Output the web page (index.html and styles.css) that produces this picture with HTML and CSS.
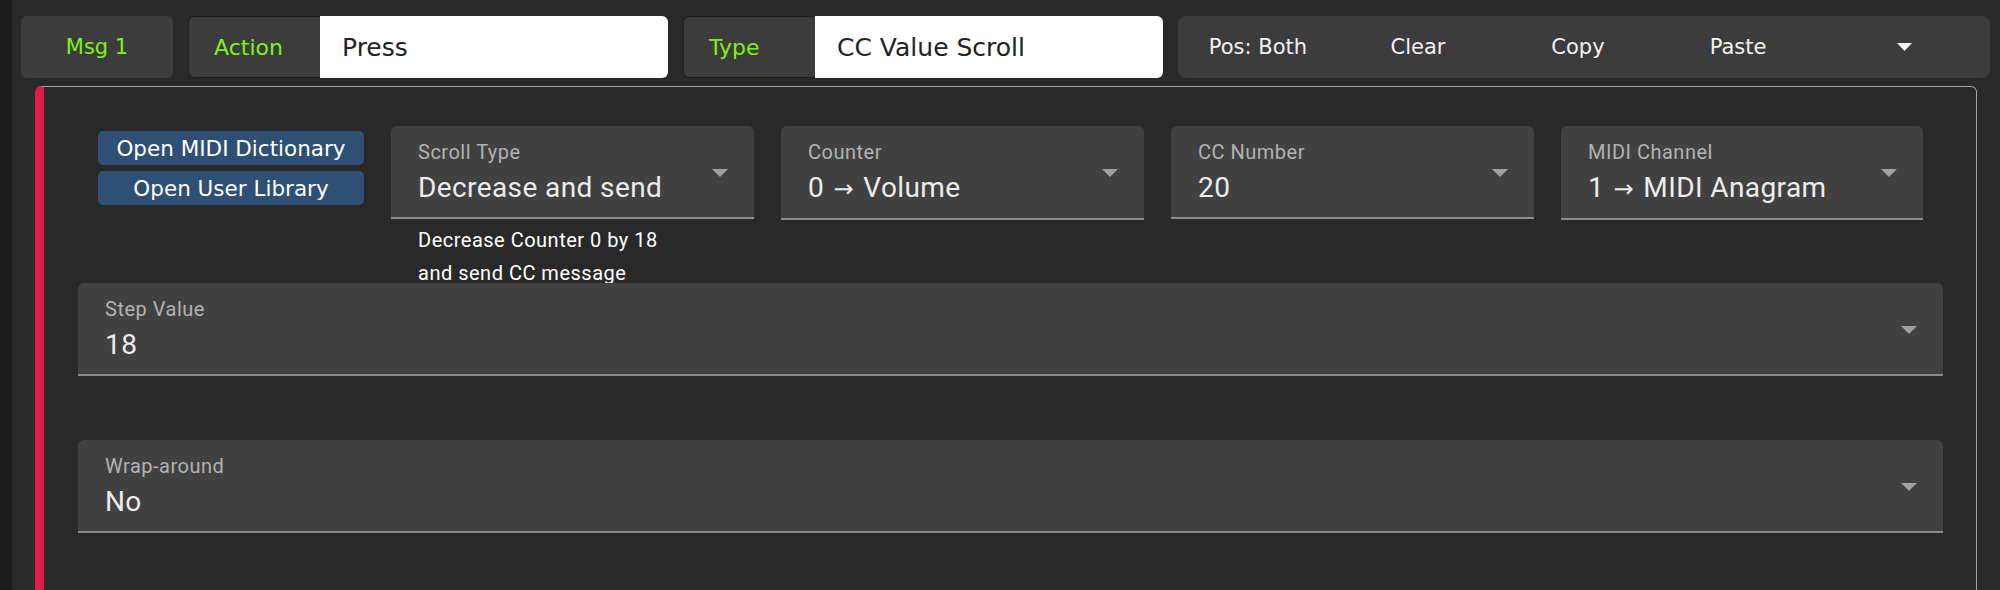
FILE: index.html
```html
<!DOCTYPE html>
<html lang="en">
<head>
  <meta charset="UTF-8" />
  <meta name="viewport" content="width=device-width, initial-scale=1.0"/>
  <title>Message Editor</title>
  <link rel="stylesheet" href="styles.css">
</head>
<body>
  <div class="app">
    <aside class="rail"></aside>

    <main class="editor">

      <!-- Message header -->
      <div class="msg-bar">
        <div class="msg-tag">Msg 1</div>
        <div class="pair">
          <span class="pair-label">Action</span>
          <span class="pair-value">Press</span>
        </div>
        <div class="pair">
          <span class="pair-label">Type</span>
          <span class="pair-value">CC Value Scroll</span>
        </div>
        <div class="msg-tools">
          <button class="tool-btn">Pos: Both</button>
          <button class="tool-btn">Clear</button>
          <button class="tool-btn">Copy</button>
          <button class="tool-btn">Paste</button>
          <span class="tool-more">
            <svg width="15" height="8" viewBox="0 0 15 8"><path d="M0 0h15L7.5 8z" fill="#f2f2f2"/></svg>
          </span>
        </div>
      </div>

      <!-- Message settings -->
      <section class="msg-panel">
        <div class="panel-row">
          <div class="lib-buttons">
            <button class="lib-btn">Open MIDI Dictionary</button>
            <button class="lib-btn">Open User Library</button>
          </div>

          <div class="select-col">
            <div class="select">
              <div class="select-label">Scroll Type</div>
              <div class="select-value">Decrease and send</div>
              <svg class="select-arrow" width="16" height="8" viewBox="0 0 16 8"><path d="M0 0h16L8 8z"/></svg>
            </div>
            <p class="help">Decrease Counter 0 by 18<br>and send CC message</p>
          </div>

          <div class="select-col">
            <div class="select">
              <div class="select-label">Counter</div>
              <div class="select-value">0 <span class="arrow">→</span> Volume</div>
              <svg class="select-arrow" width="16" height="8" viewBox="0 0 16 8"><path d="M0 0h16L8 8z"/></svg>
            </div>
          </div>

          <div class="select-col">
            <div class="select">
              <div class="select-label">CC Number</div>
              <div class="select-value">20</div>
              <svg class="select-arrow" width="16" height="8" viewBox="0 0 16 8"><path d="M0 0h16L8 8z"/></svg>
            </div>
          </div>

          <div class="select-col last">
            <div class="select">
              <div class="select-label">MIDI Channel</div>
              <div class="select-value">1 <span class="arrow">→</span> MIDI Anagram</div>
              <svg class="select-arrow" width="16" height="8" viewBox="0 0 16 8"><path d="M0 0h16L8 8z"/></svg>
            </div>
          </div>
        </div>

        <div class="select">
          <div class="select-label">Step Value</div>
          <div class="select-value">18</div>
          <svg class="select-arrow" width="16" height="8" viewBox="0 0 16 8"><path d="M0 0h16L8 8z"/></svg>
        </div>

        <div class="select wrap">
          <div class="select-label">Wrap-around</div>
          <div class="select-value">No</div>
          <svg class="select-arrow" width="16" height="8" viewBox="0 0 16 8"><path d="M0 0h16L8 8z"/></svg>
        </div>
      </section>

    </main>
  </div>
</body>
</html>
```

FILE: styles.css
```css
* {
  margin: 0;
  padding: 0;
  box-sizing: border-box;
}

body {
  background: #292929;
  height: 590px;
  overflow: hidden;
  font-family: 'DejaVu Sans', sans-serif;
}

.app {
  display: flex;
  min-height: 590px;
}

.rail {
  width: 12px;
  background: #1d1d1d;
  flex-shrink: 0;
}

.editor {
  flex: 1;
  padding: 16px 10px 0 9px;
}

/* header bar */

.msg-bar {
  display: flex;
  gap: 15px;
  height: 62px;
}

.msg-tag {
  width: 152px;
  background: #3c3c3c;
  border-radius: 6px;
  color: #7cf21a;
  font-size: 21px;
  display: flex;
  align-items: center;
  justify-content: center;
}

.pair {
  width: 480px;
  display: flex;
}

.pair-label {
  width: 132px;
  background: #3c3c3c;
  border: 1px solid #1f1f1f;
  border-right: none;
  border-radius: 6px 0 0 6px;
  padding-left: 25px;
  color: #7cf21a;
  font-size: 22px;
  display: flex;
  align-items: center;
}

.pair-value {
  flex: 1;
  background: #fff;
  border-radius: 0 6px 6px 0;
  padding-left: 22px;
  color: #222;
  font-size: 25px;
  display: flex;
  align-items: center;
}

.msg-tools {
  flex: 1;
  display: flex;
  background: #3c3c3c;
  border-radius: 8px;
}

.tool-btn {
  width: 160px;
  background: none;
  border: none;
  color: #f2f2f2;
  font-family: 'DejaVu Sans', sans-serif;
  font-size: 21px;
}

.tool-more {
  flex: 1;
  display: flex;
  align-items: center;
  justify-content: center;
}

/* settings panel */

.msg-panel {
  margin: 8px 13px 0 14px;
  border: 1px solid #a0a8b3;
  border-left: 9px solid #e31b4b;
  border-radius: 6px;
  padding: 39px 33px 120px 34px;
  font-family: Roboto, sans-serif;
}

.panel-row {
  display: flex;
  gap: 27px;
  padding-left: 20px;
  height: 157px;
}

.lib-buttons {
  width: 266px;
  padding-top: 5px;
  display: flex;
  flex-direction: column;
  gap: 6px;
}

.lib-btn {
  height: 34px;
  background: #2f4f74;
  border: none;
  border-radius: 5px;
  color: #fff;
  font-family: 'DejaVu Sans', sans-serif;
  font-size: 21.5px;
}

.select-col {
  width: 363px;
}

.select-col.last {
  width: 362px;
}

.select {
  position: relative;
  background: #414141;
  border-radius: 6px 6px 0 0;
  border-bottom: 2px solid #8a8a8a;
  padding: 14px 27px 12px;
}

.select-label {
  font-size: 20px;
  line-height: 24px;
  letter-spacing: 0.5px;
  color: #b2b2b2;
}

.select-value {
  margin-top: 7px;
  font-size: 28px;
  line-height: 34px;
  letter-spacing: 0.4px;
  color: #ececec;
}

.select-value .arrow {
  font-family: 'DejaVu Sans', sans-serif;
  font-size: 24px;
  margin: 0 2px;
}

.select-arrow {
  position: absolute;
  right: 26px;
  top: 43px;
  fill: #a0a0a0;
}

.help {
  margin-top: 5px;
  padding-left: 27px;
  font-size: 20px;
  line-height: 33px;
  letter-spacing: 0.5px;
  color: #fff;
}

.select.wrap {
  margin-top: 64px;
}
```
